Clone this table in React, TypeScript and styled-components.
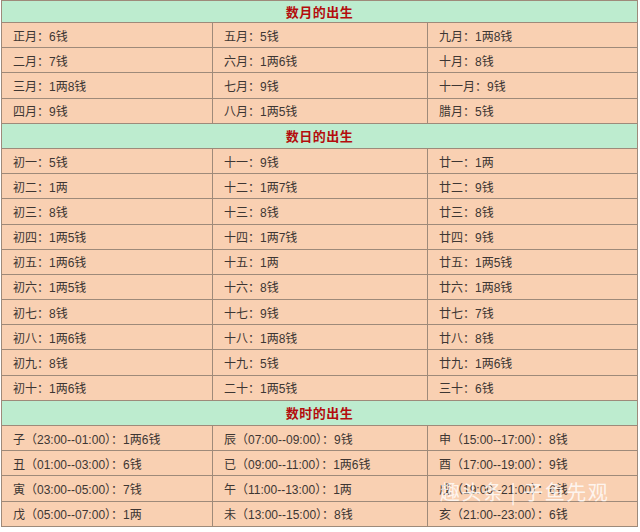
import React from "react";
import styled, { createGlobalStyle } from "styled-components";

const GlobalStyle = createGlobalStyle`
  body {
    margin: 0;
    background: #ffffff;
    font-family: "Liberation Sans", "Noto Sans CJK SC", sans-serif;
  }
`;

const Page = styled.div`
  position: relative;
  width: 640px;
  height: 532px;
  padding: 0 0 0 1px;
  box-sizing: border-box;
`;

const Grid = styled.div`
  display: grid;
  grid-template-columns: 210px 214px 209px;
  grid-template-rows: 21px repeat(20, 24.2px);
  gap: 1px;
  padding: 1px;
  width: 637px;
  box-sizing: border-box;
  background: #9e8a7a;
  border-top: 0;
`;

const Header = styled.div`
  grid-column: 1 / -1;
  background: #bdeccf;
  color: #b40d0d;
  font-weight: bold;
  font-size: 13px;
  display: flex;
  align-items: center;
  justify-content: center;
  letter-spacing: 0.5px;
`;

const Cell = styled.div`
  background: #f9d0b2;
  color: #3d3633;
  font-size: 12px;
  display: flex;
  align-items: center;
  padding-left: 11px;
  white-space: nowrap;
`;

const Watermark = styled.div`
  position: absolute;
  left: 440px;
  top: 477px;
  color: rgba(255, 255, 255, 0.8);
  font-size: 20px;
  font-family: "Noto Sans CJK SC", sans-serif;
  letter-spacing: 1.5px;
  pointer-events: none;
`;

const sections: { title: string; rows: string[][] }[] = [
  {
    title: "数月的出生",
    rows: [
      ["正月：6钱", "五月：5钱", "九月：1两8钱"],
      ["二月：7钱", "六月：1两6钱", "十月：8钱"],
      ["三月：1两8钱", "七月：9钱", "十一月：9钱"],
      ["四月：9钱", "八月：1两5钱", "腊月：5钱"],
    ],
  },
  {
    title: "数日的出生",
    rows: [
      ["初一：5钱", "十一：9钱", "廿一：1两"],
      ["初二：1两", "十二：1两7钱", "廿二：9钱"],
      ["初三：8钱", "十三：8钱", "廿三：8钱"],
      ["初四：1两5钱", "十四：1两7钱", "廿四：9钱"],
      ["初五：1两6钱", "十五：1两", "廿五：1两5钱"],
      ["初六：1两5钱", "十六：8钱", "廿六：1两8钱"],
      ["初七：8钱", "十七：9钱", "廿七：7钱"],
      ["初八：1两6钱", "十八：1两8钱", "廿八：8钱"],
      ["初九：8钱", "十九：5钱", "廿九：1两6钱"],
      ["初十：1两6钱", "二十：1两5钱", "三十：6钱"],
    ],
  },
  {
    title: "数时的出生",
    rows: [
      ["子（23:00--01:00）：1两6钱", "辰（07:00--09:00）：9钱", "申（15:00--17:00）：8钱"],
      ["丑（01:00--03:00）：6钱", "已（09:00--11:00）：1两6钱", "酉（17:00--19:00）：9钱"],
      ["寅（03:00--05:00）：7钱", "午（11:00--13:00）：1两", "戌（19:00--21:00）：6钱"],
      ["戊（05:00--07:00）：1两", "未（13:00--15:00）：8钱", "亥（21:00--23:00）：6钱"],
    ],
  },
];

export default function App() {
  return (
    <Page>
      <GlobalStyle />
      <Grid>
        {sections.map((s) => (
          <React.Fragment key={s.title}>
            <Header>{s.title}</Header>
            {s.rows.flat().map((t, i) => (
              <Cell key={s.title + i}>{t}</Cell>
            ))}
          </React.Fragment>
        ))}
      </Grid>
      <Watermark>趣头条 | 子鱼先观</Watermark>
    </Page>
  );
}
